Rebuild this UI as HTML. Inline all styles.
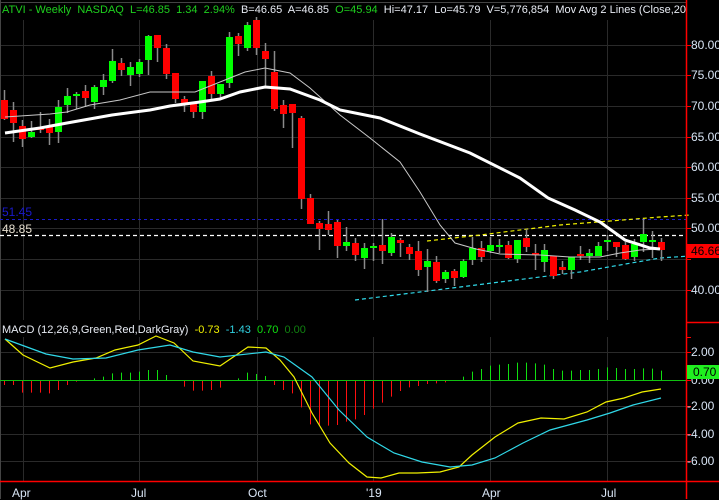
<!DOCTYPE html>
<html><head><meta charset="utf-8"><style>
html,body{margin:0;padding:0;background:#000;}
body{width:719px;height:499px;overflow:hidden;position:relative;font-family:"Liberation Sans",Arial,sans-serif;}
svg{position:absolute;left:0;top:0;}
.t{position:absolute;font-size:11px;white-space:pre;line-height:14px;overflow:hidden;}
.ax{position:absolute;font-size:12px;color:#d8e4f4;line-height:14px;}
</style></head><body>
<svg id="s" width="719" height="499" xmlns="http://www.w3.org/2000/svg"></svg>
<div class="t" style="left:2px;top:3px;width:684px;"><span style="color:#1ed01e">ATVI - Weekly  NASDAQ  L=46.85  1.34  2.94%  </span><span style="color:#e8ecf4">B=46.65  A=46.85  </span><span style="color:#1ed01e">O=45.94  </span><span style="color:#e8ecf4">Hi=47.17  Lo=45.79  V=5,776,854  Mov Avg 2 Lines (Close,20 ...</span></div>
<div class="t" style="left:2px;top:205px;color:#1a1acc;font-size:12px">51.45</div>
<div class="t" style="left:2px;top:222px;color:#e8e0d0;font-size:12px">48.85</div>
<div class="t" style="left:2px;top:323px;"><span style="color:#e8ecf4">MACD (12,26,9,Green,Red,DarkGray)  </span><span style="color:#f0f000">-0.73  </span><span style="color:#30d0e0">-1.43  </span><span style="color:#10e010">0.70  </span><span style="color:#108010">0.00</span></div>
<div class="ax" style="left:691px;top:38px">80.00</div>
<div class="ax" style="left:691px;top:68px">75.00</div>
<div class="ax" style="left:691px;top:99px">70.00</div>
<div class="ax" style="left:691px;top:130px">65.00</div>
<div class="ax" style="left:691px;top:160px">60.00</div>
<div class="ax" style="left:691px;top:191px">55.00</div>
<div class="ax" style="left:691px;top:221px">50.00</div>
<div class="ax" style="left:691px;top:283px">40.00</div>
<div class="ax" style="left:687px;top:244px;width:32px;height:14px;background:#ff0000;color:#000;padding-left:4px;box-sizing:border-box">46.66</div>
<div class="ax" style="left:691px;top:345px">2.00</div>
<div class="ax" style="left:691px;top:373px">0.00</div>
<div class="ax" style="left:687px;top:399px">-2.00</div>
<div class="ax" style="left:687px;top:427px">-4.00</div>
<div class="ax" style="left:687px;top:454px">-6.00</div>
<div class="ax" style="left:687px;top:365px;width:32px;height:14px;background:#20f020;color:#000;padding-left:6px;box-sizing:border-box">0.70</div>
<div class="ax" style="left:12px;top:486px">Apr</div>
<div class="ax" style="left:131px;top:486px">Jul</div>
<div class="ax" style="left:248px;top:486px">Oct</div>
<div class="ax" style="left:366px;top:486px">'19</div>
<div class="ax" style="left:482px;top:486px">Apr</div>
<div class="ax" style="left:601px;top:486px">Jul</div>
<script>
var s=document.getElementById('s'),h='';
function L(x1,y1,x2,y2,c,w,d){h+='<line x1="'+x1+'" y1="'+y1+'" x2="'+x2+'" y2="'+y2+'" stroke="'+c+'" stroke-width="'+(w||1)+'"'+(d?' stroke-dasharray="'+d+'"':'')+'/>';}
function P(pts,c,w,d){h+='<polyline fill="none" points="'+pts+'" stroke="'+c+'" stroke-width="'+w+'"'+(d?' stroke-dasharray="'+d+'"':'')+'/>';}
var g='#2a2a2a';
[45,75,106,137,167,198,228,259,290].forEach(function(y){L(0,y+.5,690,y+.5,g);});
[352,380,406,434,461].forEach(function(y){L(0,y+.5,690,y+.5,g);});
[23,139,257,373,490,607].forEach(function(x){L(x+.5,20,x+.5,320,g);L(x+.5,337,x+.5,481,g);});
L(0,2.5,686,2.5,'#444');L(0.5,0,0.5,499,'#444');
L(0,219.5,686,219.5,'#1a1acc',1,'3,3');
L(0,235.5,686,235.5,'#fff',1.3,'4,3');
P('427,241 480,235 560,225 660,217 690,215','#f0f000',1.2,'4,3');
P('355,300 420,292 500,282 580,272 660,258 690,256','#30d8e8',1.2,'4,3');
var c=[[1,100,119,90,120],[1,110,123,102,142],[1,126,139,120,147],[0,132,137,121,138],[1,127,130,112,133],[1,127,133,119,145],[0,107,132,100,143],[0,96,105,88,113],[0,94,96,92,109],[1,91,98,85,107],[0,87,102,85,109],[0,80,87,74,95],[0,61,81,49,83],[1,63,70,58,76],[0,67,75,62,86],[0,62,74,59,77],[0,36,60,35,75],[1,35,48,35,62],[1,48,74,44,79],[1,73,99,73,103],[1,99,103,96,112],[1,102,112,102,118],[0,81,112,81,119],[1,76,94,71,100],[0,84,94,84,99],[0,37,83,32,88],[1,36,44,33,56],[0,25,48,22,51],[1,20,48,17,55],[1,51,59,43,87],[1,72,109,51,111],[1,105,114,100,128],[1,104,113,104,148],[1,118,199,116,209],[1,198,224,194,224],[1,223,229,221,250],[1,224,230,211,235],[1,222,246,220,258],[0,242,246,227,251],[1,243,255,238,261],[0,248,258,243,269],[0,246,247,243,261],[1,245,251,219,264],[0,237,253,233,256],[1,240,243,238,257],[1,247,254,244,260],[1,251,270,241,276],[0,261,267,249,292],[1,262,281,256,283],[0,272,279,270,283],[1,271,278,269,286],[0,261,277,259,278],[0,248,260,237,265],[1,248,257,241,262],[0,245,251,237,253],[0,245,246,239,253],[1,245,258,241,259],[0,240,259,240,263],[1,238,247,229,252],[1,253,254,244,270],[0,250,262,244,272],[1,256,276,256,279],[1,267,270,261,274],[0,257,270,257,279],[1,254,256,246,260],[0,253,256,249,263],[0,246,256,242,256],[0,240,242,235,251],[1,242,247,242,257],[1,245,259,242,260],[0,244,257,239,261],[0,234,242,219,252],[0,240,241,231,258],[1,242,250,238,261]];
c.forEach(function(k,i){var x=4+9*i;L(x+.5,k[3],x+.5,k[4],'#8a8a8a',1.5);var col=k[0]?'#ff0000':'#00ff00';var hh=Math.max(2,k[2]-k[1]);h+='<rect x="'+(x-3)+'" y="'+k[1]+'" width="7" height="'+hh+'" fill="'+col+'"/>';});
P('5,117 35,115 50,114 67,112 90,105 120,100 150,92 175,92 195,92 220,82 245,72 265,68 290,73 310,88 340,115 370,138 400,162 420,192 440,225 455,243 476,249 500,254 540,255 570,257 600,257 620,253 640,250 660,249','#c8c8c8',1);
P('5,133 40,128 67,123 112,115 150,110 170,106 200,102 220,99 240,92 265,87 290,89 320,100 340,110 380,118 420,134 470,153 520,178 548,198 575,210 600,222 625,240 650,248 660,249','#ffffff',3);
var hz=[165,165,188,188,188,190,180,165,155,152,145,140,130,128,128,125,120,120,135,152,170,182,182,180,173,150,145,128,132,138,165,180,190,232,283,284,287,285,275,268,255,236,218,200,183,172,168,162,160,157,150,140,125,117,107,104,102,98,98,100,104,117,122,122,120,120,117,112,114,117,117,115,116,122];
hz.forEach(function(v,i){var x=4+9*i+.5,y=330+v/3;L(x,380,x,y,y>380?'#ff1010':'#10e010',1);});
L(0,380.5,690,380.5,'#10c010',1);
P('5,339 23,355 50,368 73,362 96,358 115,350 138,345 156,336 174,343 193,361 220,366 248,347 266,348 280,360 294,377 312,413 330,443 349,463 367,477 381,478 399,473 417,473 440,472 459,467 472,455 495,437 518,423 541,418 564,419 587,412 606,402 624,398 642,392 661,389','#f0f000',1.2);
P('5,339 46,354 73,359 106,358 138,350 170,345 193,352 220,357 266,352 284,357 312,377 339,410 367,437 394,453 422,462 450,467 472,465 495,458 523,443 550,430 587,420 610,413 633,405 661,398','#30d8e8',1.2);
L(686.5,0,686.5,499,'#ff0000',1.5);
L(686,322.5,719,322.5,'#ff0000',1.5);
L(0,481.5,719,481.5,'#ff0000',1.5);
[45,75,106,137,167,198,228,259,290,352,380,406,434,461,337].forEach(function(y){L(686,y+.5,691,y+.5,'#ff0000',1);});
s.innerHTML=h;
</script>
</body></html>
